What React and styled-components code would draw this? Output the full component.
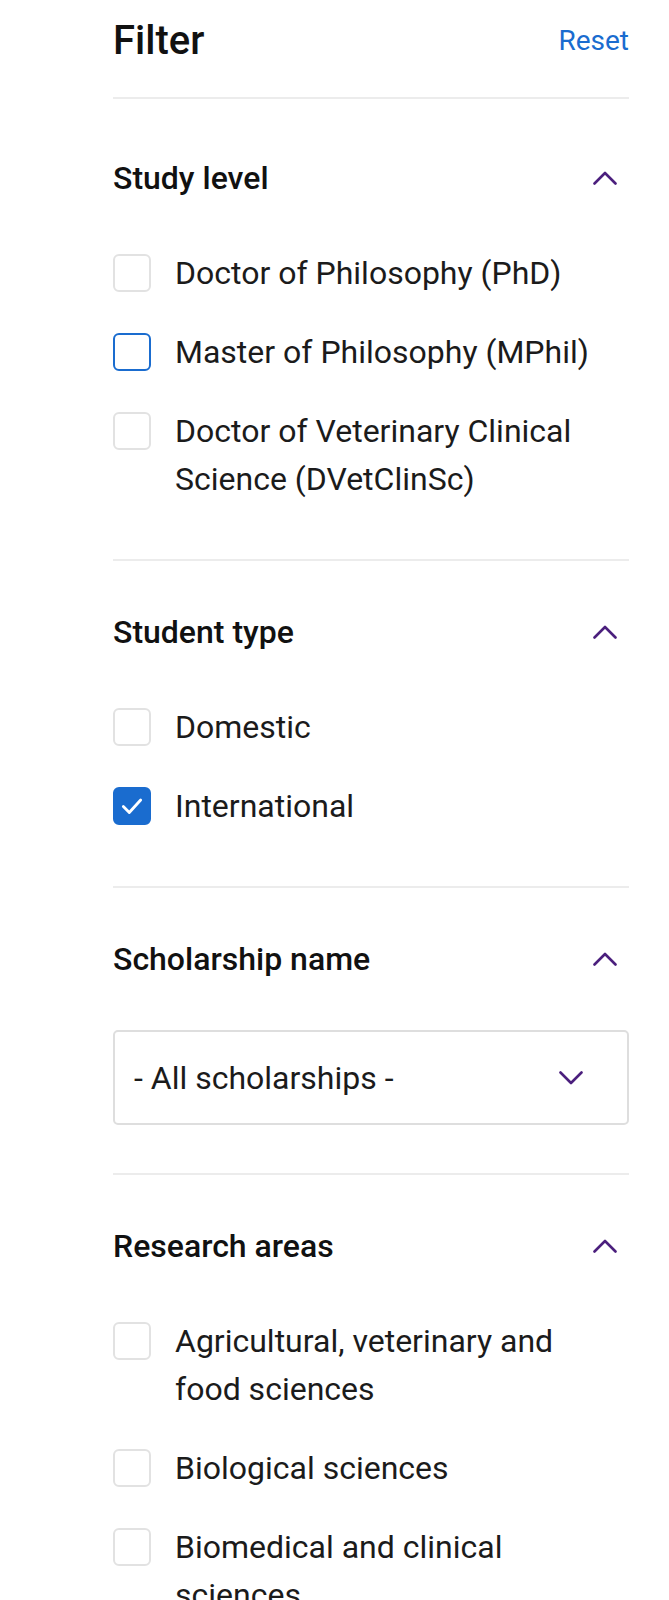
import React from 'react';
import styled, { createGlobalStyle } from 'styled-components';

const GlobalStyle = createGlobalStyle`
    html, body {
        overflow: hidden;
    }
    body {
        margin: 0;
        background: #fff;
        font-family: Roboto, "Liberation Sans", sans-serif;
        color: #1b1b1b;
    }
`;

const Panel = styled.aside`
    padding: 16px 40px 0 113px;
    height: 1600px;
    overflow: hidden;
    box-sizing: border-box;
`;

const TopBar = styled.div`
    display: flex;
    justify-content: space-between;
    align-items: center;
    height: 48px;
    padding-bottom: 33px;
    border-bottom: 2px solid #ececec;
`;

const Title = styled.h1`
    margin: 0;
    font-size: 40px;
    font-weight: 500;
    color: #111;
`;

const ResetLink = styled.a`
    font-size: 28px;
    color: #1a6ccf;
    text-decoration: none;
`;

const Section = styled.section`
    padding: ${p => (p.first ? '55px' : '47px')} 0 48px;
    border-bottom: 2px solid #ececec;
`;

const SectionHead = styled.div`
    display: flex;
    justify-content: space-between;
    align-items: center;
    height: 48px;
`;

const SectionTitle = styled.h2`
    margin: 0;
    font-size: 32px;
    font-weight: 500;
    color: #111;
`;

const Toggle = styled.span`
    display: flex;
    margin-right: 12px;
`;

const Options = styled.div`
    display: flex;
    flex-direction: column;
    gap: 31px;
    margin-top: 47px;
    padding-bottom: 8px;
`;

const Option = styled.label`
    display: flex;
    align-items: flex-start;
    gap: 24px;
    padding-right: 24px;
`;

const Box = styled.span`
    flex: none;
    box-sizing: border-box;
    width: 38px;
    height: 38px;
    margin-top: 5px;
    border-radius: 6px;
    border: 2px solid ${p => (p.checked || p.focused ? '#1a6ccf' : '#e2e2e2')};
    background: ${p => (p.checked ? '#1a6ccf' : '#fff')};
    display: flex;
    align-items: center;
    justify-content: center;
`;

const OptionText = styled.span`
    font-size: 32px;
    line-height: 48px;
    color: #1b1b1b;
`;

const Select = styled.div`
    margin-top: 47px;
    box-sizing: border-box;
    height: 95px;
    display: flex;
    align-items: center;
    justify-content: space-between;
    padding: 0 44px 0 19px;
    border: 2px solid #dedede;
    border-radius: 5px;
    font-size: 32px;
    color: #1b1b1b;
`;

const Chevron = ({ up }) => (
    <svg width="24" height="14" viewBox="0 0 24 14" fill="none">
        <path
            d={up ? 'M1.5 12.5 L12 2 L22.5 12.5' : 'M1.5 1.5 L12 12 L22.5 1.5'}
            stroke="#4b1f7d"
            strokeWidth="2.6"
            strokeLinecap="round"
            strokeLinejoin="round"
        />
    </svg>
);

const Check = () => (
    <svg width="26" height="26" viewBox="0 0 24 24" fill="none">
        <path
            d="M4 12.5 L9.5 18 L20 6.5"
            stroke="#fff"
            strokeWidth="2.6"
            strokeLinecap="round"
            strokeLinejoin="round"
        />
    </svg>
);

const CheckOption = ({ label, checked, focused }) => (
    <Option>
        <Box checked={checked} focused={focused}>
            {checked && <Check />}
        </Box>
        <OptionText>{label}</OptionText>
    </Option>
);

const Head = ({ title }) => (
    <SectionHead>
        <SectionTitle>{title}</SectionTitle>
        <Toggle><Chevron up /></Toggle>
    </SectionHead>
);

const App = () => (
    <Panel>
        <GlobalStyle />
        <TopBar>
            <Title>Filter</Title>
            <ResetLink href="#">Reset</ResetLink>
        </TopBar>

        <Section first>
            <Head title="Study level" />
            <Options>
                <CheckOption label="Doctor of Philosophy (PhD)" />
                <CheckOption label="Master of Philosophy (MPhil)" focused />
                <CheckOption label="Doctor of Veterinary Clinical Science (DVetClinSc)" />
            </Options>
        </Section>

        <Section>
            <Head title="Student type" />
            <Options>
                <CheckOption label="Domestic" />
                <CheckOption label="International" checked />
            </Options>
        </Section>

        <Section>
            <Head title="Scholarship name" />
            <Select>
                <span>- All scholarships -</span>
                <Chevron />
            </Select>
        </Section>

        <Section>
            <Head title="Research areas" />
            <Options>
                <CheckOption label="Agricultural, veterinary and food sciences" />
                <CheckOption label="Biological sciences" />
                <CheckOption label="Biomedical and clinical sciences" />
                <CheckOption label="Built environment and design" />
            </Options>
        </Section>
    </Panel>
);

export default App;
